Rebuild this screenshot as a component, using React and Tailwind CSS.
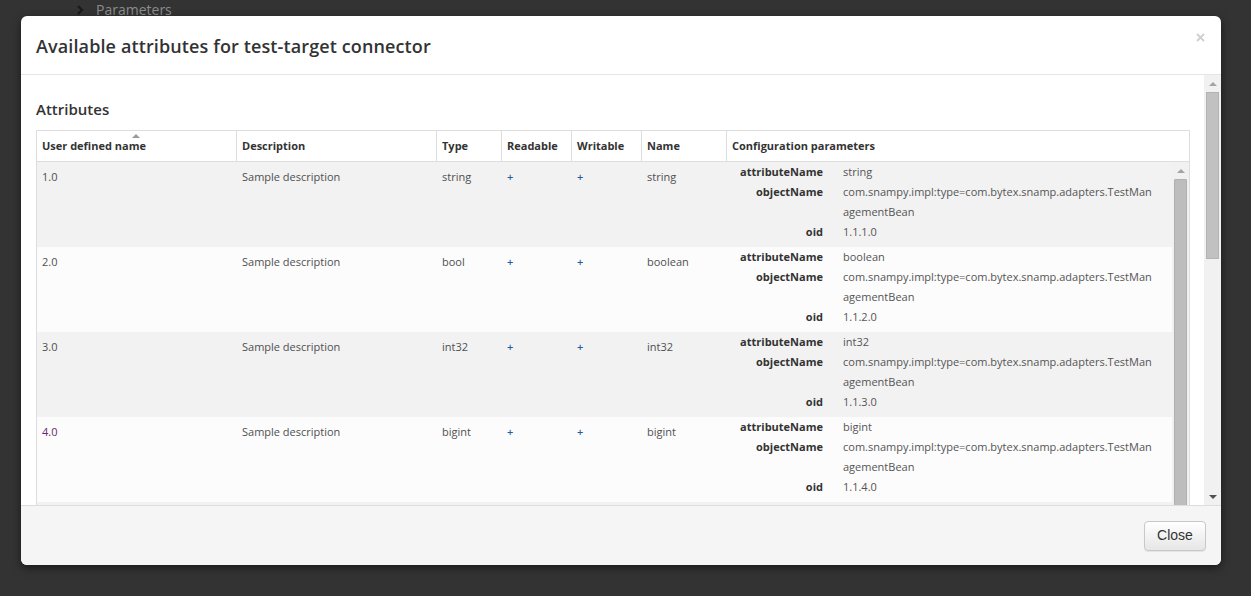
const rows = [
  { name: '1.0', type: 'string', attr: 'string', oid: '1.1.1.0', bg: 'bg-[#f2f2f2]' },
  { name: '2.0', type: 'bool', attr: 'boolean', oid: '1.1.2.0', bg: 'bg-[#fcfcfc]' },
  { name: '3.0', type: 'int32', attr: 'int32', oid: '1.1.3.0', bg: 'bg-[#f2f2f2]' },
  { name: '4.0', type: 'bigint', attr: 'bigint', oid: '1.1.4.0', bg: 'bg-[#fcfcfc]', visited: true },
];

const columns = [
  { label: 'User defined name', w: 'w-[200px]', sorted: true },
  { label: 'Description', w: 'w-[200px]' },
  { label: 'Type', w: 'w-[65px]' },
  { label: 'Readable', w: 'w-[70px]' },
  { label: 'Writable', w: 'w-[70px]' },
  { label: 'Name', w: 'w-[85px]' },
  { label: 'Configuration parameters', w: 'flex-1' },
];

const font = { fontFamily: '"Open Sans", "Liberation Sans", sans-serif' };

const ArrowUp = ({ color = '#a3a3a3' }) => (
  <svg width="8" height="4" viewBox="0 0 8 4">
    <path d="M0 4 L4 0 L8 4 Z" fill={color} />
  </svg>
);

const ArrowDown = ({ color = '#505050' }) => (
  <svg width="8" height="4" viewBox="0 0 8 4">
    <path d="M0 0 L8 0 L4 4 Z" fill={color} />
  </svg>
);

const Param = ({ label, children }) => (
  <div className="flex leading-[20px]">
    <div className="w-[90px] text-right font-bold text-[#333]">{label}</div>
    <div className="pl-[20px] text-[#555]">{children}</div>
  </div>
);

const Row = ({ row }) => (
  <div className={`flex h-[85px] ${row.bg} text-[11px] text-[#505050]`}>
    <div className={`w-[200px] px-[5px] pt-[6px] leading-[18px] ${row.visited ? 'text-[#662b6b]' : ''}`}>
      {row.name}
    </div>
    <div className="w-[200px] px-[5px] pt-[6px] leading-[18px]">Sample description</div>
    <div className="w-[65px] px-[5px] pt-[6px] leading-[18px]">{row.type}</div>
    <div className="w-[70px] px-[5px] pt-[6px] leading-[18px] font-semibold text-[#1f5d9e]">+</div>
    <div className="w-[70px] px-[5px] pt-[6px] leading-[18px] font-semibold text-[#1f5d9e]">+</div>
    <div className="w-[85px] px-[5px] pt-[6px] leading-[18px]">{row.attr}</div>
    <div className="flex-1 px-[6px]">
      <Param label="attributeName">{row.attr}</Param>
      <Param label="objectName">
        com.snampy.impl:type=com.bytex.snamp.adapters.TestMan
        <br />
        agementBean
      </Param>
      <Param label="oid">{row.oid}</Param>
    </div>
  </div>
);

export default function App() {
  return (
    <div className="relative w-[1251px] h-[596px] overflow-hidden bg-[#333333]" style={font}>
      <div className="flex items-center gap-[12px] pl-[77px] pt-[1px] text-[14px] leading-[18px] text-[#8c8c8c]">
        <svg width="7" height="10" viewBox="0 0 7 10">
          <path d="M1 1 L5 5 L1 9" stroke="#1a1a1a" strokeWidth="2.2" fill="none" />
        </svg>
        <span>Parameters</span>
      </div>

      <div className="absolute left-[21px] top-[16px] w-[1200px] h-[549px] flex flex-col overflow-hidden rounded-[6px] bg-white shadow-[0_3px_9px_rgba(0,0,0,0.5)]">
        <div className="flex h-[59px] shrink-0 justify-between border-b border-[#e5e5e5] pl-[15px] pr-[16px]">
          <h4 className="self-center text-[18px] tracking-[0.12px] font-semibold text-[#333] leading-[24px] mt-[1px]">
            Available attributes for test-target connector
          </h4>
          <svg className="mt-[17px]" width="9" height="9" viewBox="0 0 9 9">
            <path d="M1 1 L8 8 M8 1 L1 8" stroke="#cfcfcf" strokeWidth="1.8" />
          </svg>
        </div>

        <div className="flex flex-1 min-h-0">
          <div className="flex-1 min-w-0 overflow-hidden pl-[15px] pr-[14px] pt-[24px]">
            <h3 className="text-[15px] font-semibold text-[#333] leading-[21px] mb-[10px]">Attributes</h3>
            <div className="border border-[#dddddd]">
              <div className="flex h-[31px] border-b border-[#dddddd] bg-white text-[11px] font-bold text-[#333]">
                {columns.map((c, i) => (
                  <div
                    key={c.label}
                    className={`relative flex items-center px-[5px] ${c.w} ${i < columns.length - 1 ? 'border-r border-[#dddddd]' : ''}`}
                  >
                    {c.sorted && (
                      <span className="absolute left-[95px] top-[3px]">
                        <ArrowUp color="#999" />
                      </span>
                    )}
                    <span className="pt-[1px]">{c.label}</span>
                  </div>
                ))}
              </div>
              <div className="flex h-[360px] overflow-hidden">
                <div className="flex-1 min-w-0">
                  {rows.map((r) => (
                    <Row key={r.name} row={r} />
                  ))}
                  <div className="h-[40px] bg-[#f2f2f2]" />
                </div>
                <div className="flex w-[17px] shrink-0 flex-col items-center bg-[#f1f1f1]">
                  <div className="flex h-[17px] items-center justify-center">
                    <ArrowUp color="#a3a3a3" />
                  </div>
                  <div className="h-[340px] w-[13px] rounded-[1px] bg-[#bdbdbd] border border-[#b0b0b0]" />
                </div>
              </div>
            </div>
          </div>

          <div className="flex w-[17px] shrink-0 flex-col items-center bg-[#f1f1f1]">
            <div className="flex h-[17px] items-center justify-center">
              <ArrowUp color="#a3a3a3" />
            </div>
            <div className="h-[167px] w-[13px] bg-[#c1c1c1] border border-[#b3b3b3]" />
            <div className="flex-1" />
            <div className="flex h-[17px] items-center justify-center">
              <ArrowDown color="#505050" />
            </div>
          </div>
        </div>

        <div className="flex h-[60px] shrink-0 items-center justify-end border-t border-[#dddddd] bg-[#f5f5f5] pr-[15px]">
          <button
            className="h-[30px] w-[62px] rounded-[4px] border border-[#c8c8c8] bg-gradient-to-b from-white to-[#e6e6e6] text-[14px] text-[#333] shadow-[inset_0_1px_0_rgba(255,255,255,0.15),0_1px_1px_rgba(0,0,0,0.075)]"
            style={{ fontFamily: '"Liberation Sans", Arial, sans-serif' }}
          >
            Close
          </button>
        </div>
      </div>
    </div>
  );
}
